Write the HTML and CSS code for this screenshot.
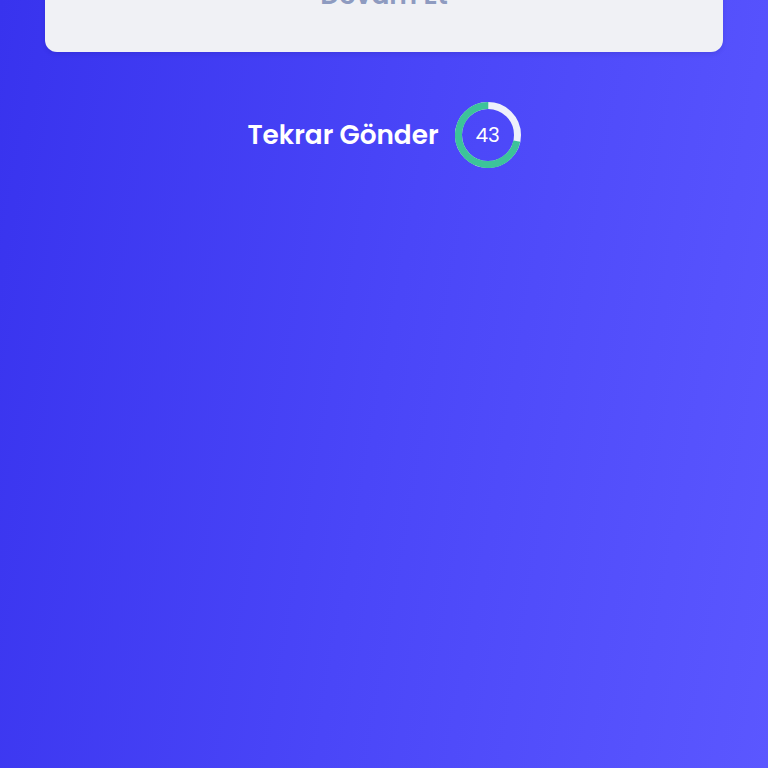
FILE: index.html
```html
<!DOCTYPE html>
<html lang="tr">
<head>
<meta charset="utf-8">
<link rel="stylesheet" href="styles.css">
</head>
<body>
<div class="page">
  <div class="card-wrap">
    <div class="card">
      <span class="card-text">Devam Et</span>
    </div>
  </div>
  <div class="resend">
    <span class="resend-text">Tekrar Gönder</span>
    <div class="timer">
      <svg width="66" height="66" viewBox="0 0 66 66">
        <circle cx="33" cy="33" r="29.5" fill="none" stroke="#eef0fb" stroke-width="7"/>
        <circle cx="33" cy="33" r="29.5" fill="none" stroke="#3cc39a" stroke-width="7"
          stroke-dasharray="132.9 185.4" transform="rotate(12 33 33)"/>
      </svg>
      <span class="timer-num">43</span>
    </div>
  </div>
</div>
</body>
</html>
```
FILE: styles.css
```css
html, body {
  margin: 0;
  padding: 0;
}
body {
  width: 768px;
  height: 768px;
  overflow: hidden;
  background: linear-gradient(100deg, #3833ee 0%, #4a46f8 50%, #5b57ff 100%);
  font-family: "Poppins", "Inter", "Open Sans", sans-serif;
}
.page {
  display: flex;
  flex-direction: column;
  align-items: center;
}
.card-wrap {
  width: 100%;
  box-sizing: border-box;
  padding: 0 45px;
}
.card {
  margin-top: -60px;
  height: 112px;
  background: #f0f1f5;
  border-radius: 12px;
  display: flex;
  justify-content: center;
  box-shadow: 0 2px 4px rgba(20, 20, 120, 0.15);
}
.card-text {
  margin-top: 40px;
  font-size: 26.5px;
  font-weight: 600;
  color: #8e9bc0;
  line-height: 30px;
}
.resend {
  margin-top: 50px;
  display: flex;
  align-items: center;
  gap: 16px;
}
.resend-text {
  font-size: 26.3px;
  font-weight: 600;
  color: #ffffff;
}
.timer {
  position: relative;
  width: 66px;
  height: 66px;
}
.timer svg {
  display: block;
}
.timer-num {
  position: absolute;
  inset: 0;
  display: flex;
  align-items: center;
  justify-content: center;
  color: #ffffff;
  font-size: 20px;
  font-weight: 400;
}
```
